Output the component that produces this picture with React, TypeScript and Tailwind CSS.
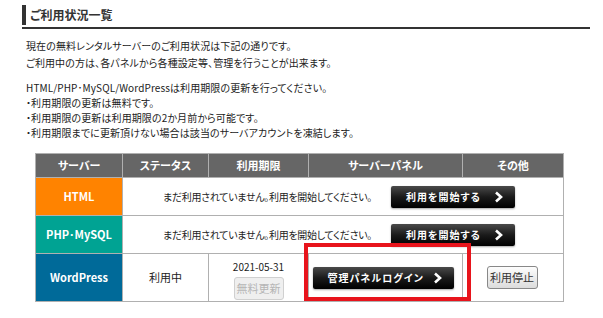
import React from 'react'

const font = "font-['Noto_Sans_CJK_JP','Liberation_Sans',sans-serif] [font-feature-settings:'palt']"

function Chevron() {
  return (
    <svg width="9" height="12" viewBox="0 0 9 12" className="ml-auto shrink-0">
      <path d="M2 1.5 L7 6 L2 10.5" stroke="white" strokeWidth="2.6" fill="none" />
    </svg>
  )
}

function DarkButton({ label, w }: { label: string; w: string }) {
  return (
    <div className={`${w} h-[22px] flex items-center pl-[15px] pr-[12px] rounded-[2px] bg-[linear-gradient(#4a4a4a,#1a1a1a_50%,#000)] shadow-[0_1px_2px_rgba(0,0,0,0.35)] text-white font-bold text-[10px] tracking-[1px] whitespace-nowrap`}>
      <span>{label}</span>
      <Chevron />
    </div>
  )
}

const th = 'border border-[#b0b0b0] bg-[#666] text-white font-bold text-[11px] h-[24px] p-0 text-center'
const td = 'border border-[#b0b0b0] p-0 text-center text-[10px] text-[#222]'

export default function App() {
  return (
    <div className={`relative w-[603px] h-[318px] bg-white overflow-hidden text-[#222] ${font}`}>
      {/* title */}
      <div className="ml-[22px] mr-[13px] mt-[5px] border-b-2 border-[#333] pb-[2px]">
        <div className="border-l-4 border-[#333] pl-[4px] h-[20px] leading-[20px] text-[12px] font-bold text-[#333]">ご利用状況一覧</div>
      </div>

      <div className="ml-[26px] mt-[8px] text-[10px] leading-[17px] tracking-[0.1px]">
        <p>現在の無料レンタルサーバーのご利用状況は下記の通りです。</p>
        <p>ご利用中の方は、各パネルから各種設定等、管理を行うことが出来ます。</p>
        <div className="mt-[9px] leading-[15px]">
          <p>HTML/PHP･MySQL/WordPressは利用期限の更新を行ってください。</p>
          <p>・利用期限の更新は無料です。</p>
          <p>・利用期限の更新は利用期限の2か月前から可能です。</p>
          <p>・利用期限までに更新頂けない場合は該当のサーバアカウントを凍結します。</p>
        </div>
      </div>

      <table className="ml-[35px] mt-[13px] w-[528px] table-fixed border-collapse">
        <colgroup>
          <col className="w-[87px]" />
          <col className="w-[86px]" />
          <col className="w-[100px]" />
          <col className="w-[154px]" />
          <col className="w-[101px]" />
        </colgroup>
        <thead>
          <tr>
            <th className={th}>サーバー</th>
            <th className={th}>ステータス</th>
            <th className={th}>利用期限</th>
            <th className={th}>サーバーパネル</th>
            <th className={th}>その他</th>
          </tr>
        </thead>
        <tbody>
          {[
            { name: 'HTML', bg: 'bg-[#ff8300]' },
            { name: 'PHP･MySQL', bg: 'bg-[#00a393]' },
          ].map(r => (
            <tr key={r.name} className="h-[38px]">
              <td className={`${td} ${r.bg} text-white font-bold text-[11px]`}>{r.name}</td>
              <td className={td} colSpan={4}>
                <div className="flex items-center justify-center gap-[19px] pr-[8px]">
                  <span className="tracking-[-0.3px]">まだ利用されていません。利用を開始してください。</span>
                  <DarkButton label="利用を開始する" w="w-[124px]" />
                </div>
              </td>
            </tr>
          ))}
          <tr className="h-[48px]">
            <td className={`${td} bg-[#006a99] text-white font-bold text-[11px]`}>WordPress</td>
            <td className={`${td} text-[11px]`}>利用中</td>
            <td className={td}>
              <div className="flex flex-col items-center pt-[4px]">
                <span className="leading-[14px]">2021-05-31</span>
                <span className="mt-[3px] w-[50px] h-[23px] leading-[21px] border border-[#d0d0d0] rounded-[3px] bg-[#efefef] text-[#b5b5b5] text-[11px]">無料更新</span>
              </div>
            </td>
            <td className={td}>
              <div className="flex justify-center pr-[5px]">
                <DarkButton label="管理パネルログイン" w="w-[141px]" />
              </div>
            </td>
            <td className={td}>
              <div className="flex justify-center pr-[2px]">
                <span className="w-[51px] h-[23px] leading-[21px] border border-[#888] rounded-[3px] bg-[linear-gradient(#fdfdfd,#dcdcdc)] text-[#333] text-[11px]">利用停止</span>
              </div>
            </td>
          </tr>
        </tbody>
      </table>

      {/* highlight */}
      <div className="absolute left-[304px] top-[243px] w-[167px] h-[58px] border-4 border-[#e8141c]" />
    </div>
  )
}
